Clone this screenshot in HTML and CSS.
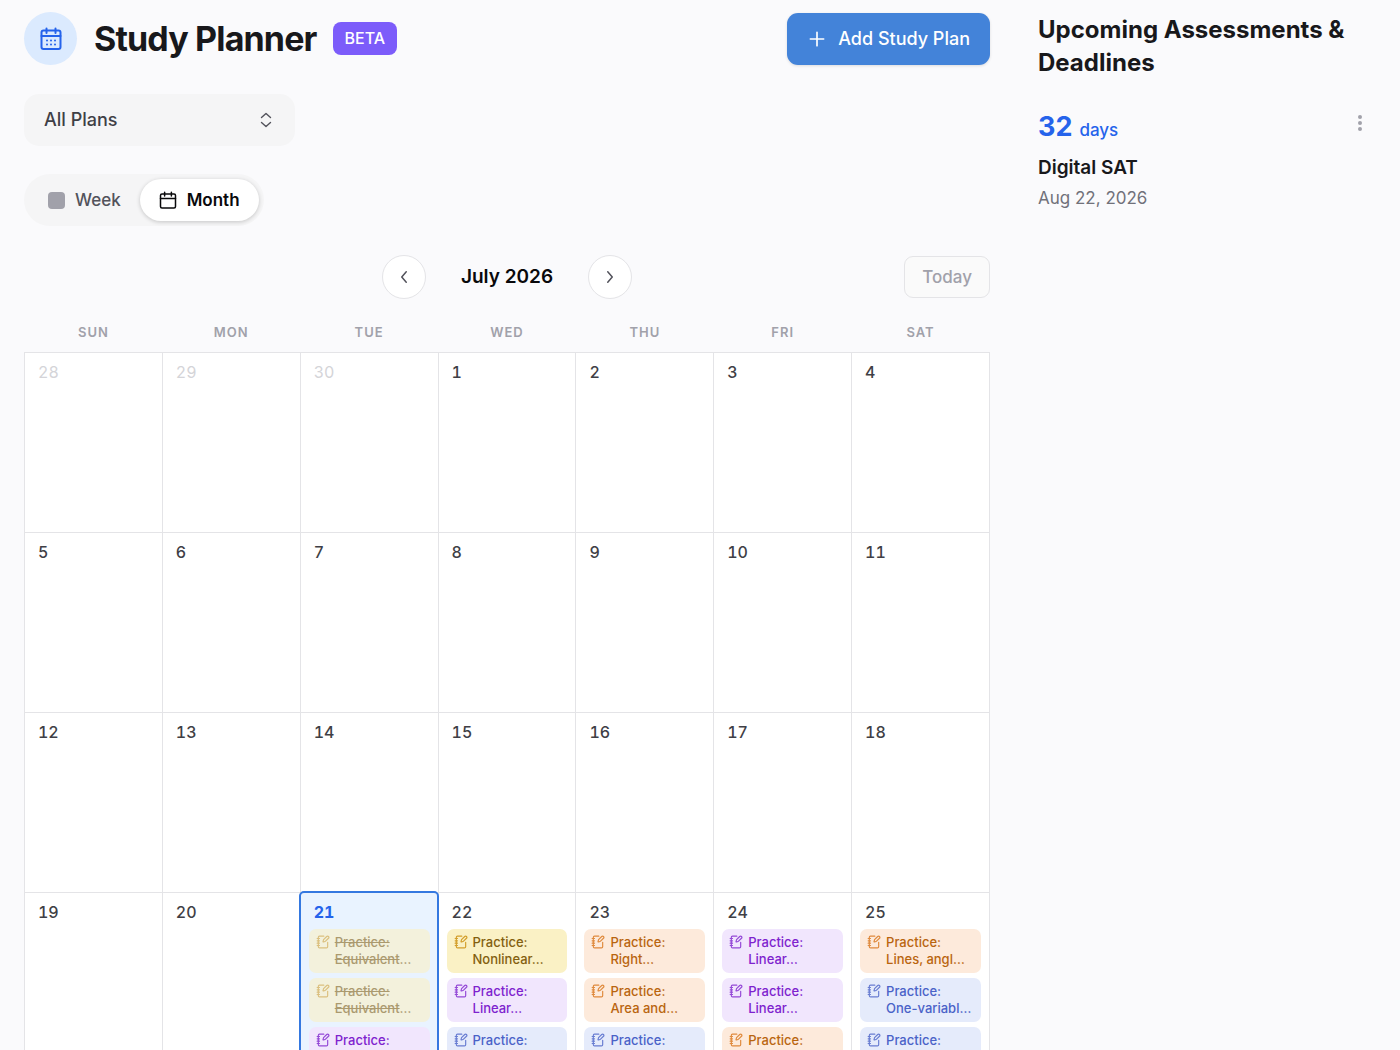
FILE: index.html
```html
<!DOCTYPE html>
<html lang="en">
<head>
<meta charset="utf-8">
<meta name="viewport" content="width=device-width, initial-scale=1">
<title>Study Planner</title>
<link rel="stylesheet" href="styles.css">
</head>
<body>
<svg class="sprite" aria-hidden="true">
  <symbol id="note" viewBox="0 0 24 24">
    <path d="M13.4 2H6a2 2 0 0 0-2 2v16a2 2 0 0 0 2 2h12a2 2 0 0 0 2-2v-7.4M2 6h4M2 10h4M2 14h4M2 18h4"/>
    <path d="M21.378 5.626a1 1 0 1 0-3.004-3.004l-5.01 5.012a2 2 0 0 0-.506.854l-.837 2.87a.5.5 0 0 0 .62.62l2.87-.837a2 2 0 0 0 .854-.506z"/>
  </symbol>
</svg>
<div class="app">
  <main class="planner">
    <header class="top">
      <span class="badge-icon">
        <svg class="icon icon-lg" viewBox="0 0 24 24" aria-hidden="true"><rect x="2.500" y="3.500" width="19" height="18.500" rx="2"/><path d="M7.500 1.500v4.500M16.500 1.500v4.500M2.500 9h19"/><path d="M8 13.500h.01M12 13.500h.01M16 13.500h.01M8 17.500h.01M12 17.500h.01M16 17.500h.01"/></svg>
      </span>
      <h1 class="title">Study Planner</h1>
      <span class="beta">BETA</span>
      <button class="add" type="button">
        <svg class="icon plus" viewBox="0 0 24 24" aria-hidden="true"><path d="M4 12h16M12 4v16"/></svg>
        Add Study Plan
      </button>
    </header>

    <div class="picker">
      <select class="picker-select" aria-label="Plan">
        <option>All Plans</option>
      </select>
      <svg class="icon picker-arrows" viewBox="0 0 16 16" aria-hidden="true"><path d="M3.500 5.500 8 1.500l4.500 4M3.500 10.500l4.500 4 4.500-4"/></svg>
    </div>

    <div class="views" role="group" aria-label="View">
      <button class="view" type="button" aria-pressed="false"><span class="square"></span>Week</button>
      <button class="view view-on" type="button" aria-pressed="true">
        <svg class="icon" viewBox="0 0 24 24" aria-hidden="true"><rect x="2" y="4" width="20" height="18.500" rx="2"/><path d="M7.500 1.500v5M16.500 1.500v5M2 10h20"/></svg>
        Month
      </button>
    </div>

    <div class="month-bar">
      <div class="month-nav">
        <button class="round" type="button" aria-label="Previous month"><svg class="icon" viewBox="0 0 24 24" aria-hidden="true"><path d="m15 19-6-7 6-7"/></svg></button>
        <h2 class="month">July 2026</h2>
        <button class="round" type="button" aria-label="Next month"><svg class="icon" viewBox="0 0 24 24" aria-hidden="true"><path d="m9 19 6-7-6-7"/></svg></button>
      </div>
      <button class="today-btn" type="button" disabled>Today</button>
    </div>

    <table class="calendar">
      <thead>
        <tr><th scope="col">SUN</th><th scope="col">MON</th><th scope="col">TUE</th><th scope="col">WED</th><th scope="col">THU</th><th scope="col">FRI</th><th scope="col">SAT</th></tr>
      </thead>
      <tbody>
        <tr>
          <td class="outside"><span class="num">28</span></td><td class="outside"><span class="num">29</span></td><td class="outside"><span class="num">30</span></td><td><span class="num">1</span></td><td><span class="num">2</span></td><td><span class="num">3</span></td><td><span class="num">4</span></td>
        </tr>
        <tr>
          <td><span class="num">5</span></td><td><span class="num">6</span></td><td><span class="num">7</span></td><td><span class="num">8</span></td><td><span class="num">9</span></td><td><span class="num">10</span></td><td><span class="num">11</span></td>
        </tr>
        <tr>
          <td><span class="num">12</span></td><td><span class="num">13</span></td><td><span class="num">14</span></td><td><span class="num">15</span></td><td><span class="num">16</span></td><td><span class="num">17</span></td><td><span class="num">18</span></td>
        </tr>
        <tr>
          <td><span class="num">19</span></td>
          <td><span class="num">20</span></td>
          <td class="current"><span class="num">21</span>
            <div class="task yellow done"><svg class="icon" aria-hidden="true"><use href="#note"/></svg><p><del>Practice:<br>Equivalent</del>…</p></div>
            <div class="task yellow done"><svg class="icon" aria-hidden="true"><use href="#note"/></svg><p><del>Practice:<br>Equivalent</del>…</p></div>
            <div class="task purple"><svg class="icon" aria-hidden="true"><use href="#note"/></svg><p>Practice:</p></div>
          </td>
          <td><span class="num">22</span>
            <div class="task yellow"><svg class="icon" aria-hidden="true"><use href="#note"/></svg><p>Practice:<br>Nonlinear…</p></div>
            <div class="task purple"><svg class="icon" aria-hidden="true"><use href="#note"/></svg><p>Practice:<br>Linear…</p></div>
            <div class="task blue"><svg class="icon" aria-hidden="true"><use href="#note"/></svg><p>Practice:</p></div>
          </td>
          <td><span class="num">23</span>
            <div class="task orange"><svg class="icon" aria-hidden="true"><use href="#note"/></svg><p>Practice:<br>Right…</p></div>
            <div class="task orange"><svg class="icon" aria-hidden="true"><use href="#note"/></svg><p>Practice:<br>Area and…</p></div>
            <div class="task blue"><svg class="icon" aria-hidden="true"><use href="#note"/></svg><p>Practice:</p></div>
          </td>
          <td><span class="num">24</span>
            <div class="task purple"><svg class="icon" aria-hidden="true"><use href="#note"/></svg><p>Practice:<br>Linear…</p></div>
            <div class="task purple"><svg class="icon" aria-hidden="true"><use href="#note"/></svg><p>Practice:<br>Linear…</p></div>
            <div class="task orange"><svg class="icon" aria-hidden="true"><use href="#note"/></svg><p>Practice:</p></div>
          </td>
          <td><span class="num">25</span>
            <div class="task orange"><svg class="icon" aria-hidden="true"><use href="#note"/></svg><p>Practice:<br>Lines, angl…</p></div>
            <div class="task blue"><svg class="icon" aria-hidden="true"><use href="#note"/></svg><p>Practice:<br>One-variabl…</p></div>
            <div class="task blue"><svg class="icon" aria-hidden="true"><use href="#note"/></svg><p>Practice:</p></div>
          </td>
        </tr>
      </tbody>
    </table>
  </main>

  <aside class="upcoming">
    <h2 class="upcoming-title">Upcoming Assessments &amp; Deadlines</h2>
    <article class="deadline">
      <div class="deadline-text">
        <p class="count"><strong>32</strong> days</p>
        <h3 class="exam">Digital SAT</h3>
        <time class="date" datetime="2026-08-22">Aug 22, 2026</time>
      </div>
      <button class="more" type="button" aria-label="More options"><svg viewBox="0 0 20 20" aria-hidden="true"><circle cx="10" cy="4" r="2"/><circle cx="10" cy="10" r="2"/><circle cx="10" cy="16" r="2"/></svg></button>
    </article>
  </aside>
</div>
</body>
</html>
```
FILE: styles.css
```css
* { box-sizing: border-box; }

body {
  margin: 0;
  background: #fafafc;
  color: #18181b;
  font-family: Inter, "Liberation Sans", sans-serif;
  font-size: 16px;
}

h1, h2, h3, p { margin: 0; }

button, select { font: inherit; color: inherit; cursor: pointer; }

.sprite { position: absolute; width: 0; height: 0; }

.icon {
  width: 18px;
  height: 18px;
  flex: none;
  fill: none;
  stroke: currentColor;
  stroke-width: 2;
  stroke-linecap: round;
  stroke-linejoin: round;
}
.icon-lg { width: 24px; height: 24px; }
.plus { width: 20px; height: 20px; }

.app {
  display: grid;
  grid-template-columns: minmax(0, 1fr) 386px;
  height: 100vh;
}

.planner {
  padding: 12px 24px 24px;
  overflow-y: auto;
  scrollbar-width: none;
}

.top { display: flex; align-items: center; }

.badge-icon {
  display: grid;
  place-items: center;
  width: 53px;
  height: 53px;
  border-radius: 50%;
  background: #dbeafe;
  color: #2563eb;
}

.title {
  margin-left: 17px;
  font-size: 34px;
  line-height: 40px;
  font-weight: 700;
  letter-spacing: -0.025em;
}

.beta {
  margin-left: 16px;
  padding: 0 12px;
  border-radius: 8px;
  background: #7c5cfa;
  color: #fff;
  font-size: 16px;
  line-height: 33px;
  font-weight: 500;
}

.add {
  display: flex;
  align-items: center;
  gap: 11px;
  height: 52px;
  margin-left: auto;
  padding: 0 20px;
  border: 0;
  border-radius: 11px;
  background: #4383d9;
  color: #fff;
  font-size: 18px;
  font-weight: 500;
  box-shadow: 0 1px 3px rgb(0 0 0 / 12%);
}

.picker {
  display: grid;
  align-items: center;
  width: 271px;
  margin-top: 29px;
}
.picker-select {
  grid-area: 1 / 1;
  height: 52px;
  padding: 0 20px 2px;
  border: 0;
  border-radius: 15px;
  appearance: none;
  background: #f5f5f6;
  color: #3f3f46;
  font-size: 18px;
  font-weight: 500;
}
.picker-arrows {
  grid-area: 1 / 1;
  justify-self: end;
  width: 16px;
  height: 16px;
  margin-right: 21px;
  color: #52525b;
  stroke-width: 1.400;
  pointer-events: none;
}

.views {
  display: flex;
  width: max-content;
  margin-top: 28px;
  padding: 5px;
  border-radius: 26px;
  background: #f5f5f6;
}
.view {
  display: flex;
  align-items: center;
  gap: 10px;
  height: 42px;
  padding: 0 19px;
  border: 0;
  border-radius: 21px;
  background: none;
  color: #52525b;
  font-size: 17px;
  font-weight: 500;
}
.view-on {
  background: #fff;
  color: #09090b;
  font-weight: 600;
  box-shadow: 0 1px 4px rgb(0 0 0 / 20%);
}
.square {
  width: 17px;
  height: 17px;
  border-radius: 4px;
  background: #a1a1aa;
}

.month-bar {
  display: grid;
  grid-template-columns: 1fr auto 1fr;
  align-items: center;
  margin-top: 29px;
}
.month-nav {
  grid-column: 2;
  display: flex;
  align-items: center;
  gap: 35px;
}
.round {
  display: grid;
  place-items: center;
  width: 44px;
  height: 44px;
  padding: 0;
  border: 1px solid #e4e4e7;
  border-radius: 50%;
  background: #fff;
  color: #52525b;
}
.month { font-size: 19px; line-height: 28px; font-weight: 600; color: #09090b; }
.today-btn {
  justify-self: end;
  height: 42px;
  padding: 0 17px;
  border: 1px solid #e4e4e7;
  border-radius: 9px;
  background: #fafafa;
  color: #a1a1aa;
  font-size: 17px;
  font-weight: 500;
}

.calendar {
  width: 100%;
  margin-top: 13px;
  border-collapse: collapse;
  table-layout: fixed;
}
.calendar th {
  height: 40px;
  padding: 0;
  color: #a1a1aa;
  font-size: 13px;
  font-weight: 600;
  letter-spacing: 1px;
}
.calendar td {
  height: 180px;
  padding: 8px;
  border: 1px solid #e4e4e7;
  background: #fff;
  vertical-align: top;
}
.num {
  display: block;
  padding: 0 5px;
  margin-bottom: 5px;
  color: #3f3f46;
  font-size: 16px;
  line-height: 23px;
  font-weight: 500;
  font-variant-numeric: tabular-nums;
}
.outside .num { color: #d4d4d8; font-weight: 400; }
.calendar .current {
  background: #e9f3ff;
  outline: 2px solid #3478e0;
  outline-offset: -1px;
  border-radius: 4px;
}
.current .num { color: #2563eb; font-weight: 700; }

.task {
  display: flex;
  gap: 5px;
  height: 44px;
  margin-bottom: 5px;
  padding: 5px 7px;
  border-radius: 7px;
  font-size: 13px;
  line-height: 17px;
  font-weight: 500;
  white-space: nowrap;
}
.task .icon { width: 14px; height: 14px; margin-top: 1px; opacity: 0.8; }
.yellow { background: #faf1c5; color: #83600f; }
.yellow .icon { color: #ca8a04; }
.purple { background: #f1e6fd; color: #7e22ce; }
.orange { background: #fdeadb; color: #b9650f; }
.orange .icon { color: #d97316; }
.blue { background: #e5ebfb; color: #4a62c8; }
.done { opacity: 0.6; }

.upcoming { padding: 13px 24px; }
.upcoming-title { font-size: 24px; line-height: 33px; font-weight: 700; }
.deadline { display: flex; justify-content: space-between; margin-top: 31px; }
.count {
  display: flex;
  align-items: baseline;
  gap: 7px;
  color: #2563eb;
  font-size: 17px;
  line-height: 34px;
  font-weight: 500;
}
.count strong { font-size: 27px; font-weight: 700; }
.exam { margin-top: 7px; font-size: 19px; line-height: 28px; font-weight: 600; }
.date { display: block; margin-top: 4px; color: #71717a; font-size: 17px; line-height: 24px; }
.more {
  display: grid;
  place-items: center;
  width: 32px;
  height: 26px;
  padding: 0;
  border: 0;
  background: none;
}
.more svg { width: 20px; height: 20px; fill: #a1a1aa; }
```
